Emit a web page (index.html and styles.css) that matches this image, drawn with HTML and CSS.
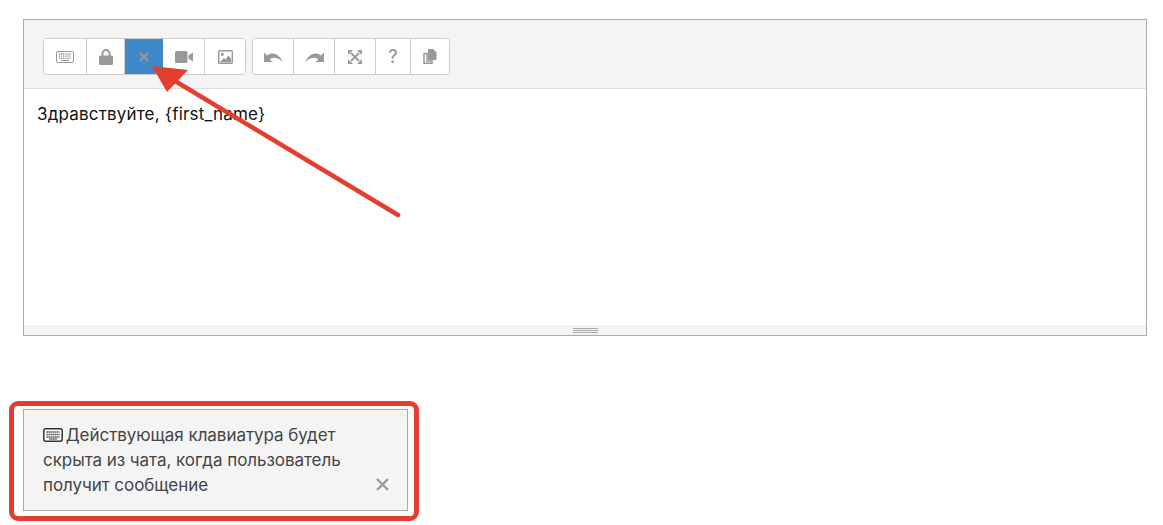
FILE: index.html
```html
<!DOCTYPE html>
<html lang="ru">
<head>
<meta charset="utf-8">
<title>Редактор</title>
<link rel="stylesheet" href="styles.css">
</head>
<body>
<div class="page">
  <section class="editor">
    <div class="toolbar">
      <div class="group">
        <button class="btn w43"><svg width="18" height="12" viewBox="0 0 18 12"><rect x=".5" y=".5" width="17" height="11" rx="1.5" fill="#fff" stroke="#999"/><path d="M3 3h12M3 5.2h12M3 7.4h12" stroke="#999" stroke-width="1.3" stroke-dasharray="1.2 .7"/><path d="M5 9.5h8" stroke="#999" stroke-width="1.2"/></svg></button>
        <button class="btn w38"><svg width="14" height="16" viewBox="0 0 14 16"><path d="M3.500 7V4.600a3.500 3.500 0 0 1 7 0V7" fill="none" stroke="#999" stroke-width="2"/><rect y="6.500" width="14" height="9.500" rx="1.500" fill="#999"/></svg></button>
        <button class="btn w38 active"><svg width="10" height="10" viewBox="0 0 10 10"><path d="M1 1l8 8M9 1l-8 8" stroke="#999" stroke-width="2"/></svg></button>
        <button class="btn w42"><svg width="18" height="12" viewBox="0 0 18 12"><rect width="12.500" height="12" rx="1.500" fill="#999"/><path d="M13.500 4.600L18 1.500v9l-4.500-3.100z" fill="#999"/></svg></button>
        <button class="btn w40"><svg width="15" height="14" viewBox="0 0 15 14"><rect x=".7" y=".7" width="13.600" height="12.600" rx="1" fill="#fff" stroke="#999" stroke-width="1.400"/><circle cx="4.300" cy="4.300" r="1.500" fill="#999"/><path d="M2 12l4-4 1.500 1.500L10.500 5.500 13 8.500V12z" fill="#999"/></svg></button>
      </div>
      <div class="group">
        <button class="btn w41"><svg width="19" height="10" viewBox="0 0 19 10"><path d="M0 .5V10h8.500L5.800 7.400C8.500 4.800 13.500 4.600 19 10 15.500 2.500 8.500-1 3.200 3.500z" fill="#999"/></svg></button>
        <button class="btn w41"><svg class="flip" width="19" height="10" viewBox="0 0 19 10"><path d="M0 .5V10h8.500L5.800 7.400C8.500 4.800 13.500 4.600 19 10 15.500 2.500 8.500-1 3.200 3.500z" fill="#999"/></svg></button>
        <button class="btn w41"><svg width="14" height="14" viewBox="0 0 14 14"><path d="M3 3l8 8M11 3l-8 8" stroke="#999" stroke-width="1.800"/><path d="M0 0h5L0 5zM14 0H9l5 5zM0 14h5l-5-5zM14 14H9l5-5z" fill="#999"/></svg></button>
        <button class="btn w35 qmark">?</button>
        <button class="btn w38"><svg width="14" height="15" viewBox="0 0 14 15"><path d="M1 4.500h3v7.500h5v2.200H1z" fill="none" stroke="#999" stroke-width="1.500"/><path d="M5 1a1 1 0 0 1 1-1h4l3.500 3.500V10a1 1 0 0 1-1 1H6a1 1 0 0 1-1-1z" fill="#999"/></svg></button>
      </div>
    </div>
    <div class="content">Здравствуйте, {first_name}</div>
    <div class="resize"><span class="grip"></span></div>
  </section>

  <div class="highlight">
    <div class="notice">
      <p class="notice-text"><svg class="kbd" width="20" height="14" viewBox="0 0 20 14"><rect x=".8" y=".8" width="18.400" height="12.400" rx="2" fill="#fff" stroke="#333" stroke-width="1.500"/><path d="M3.500 4h13M3.500 6.500h13M3.500 9h13" stroke="#333" stroke-width="1.400" stroke-dasharray="1.300 .7"/><path d="M6 11h8" stroke="#333" stroke-width="1"/></svg> Действующая клавиатура будет<br>скрыта из чата, когда пользователь<br>получит сообщение</p>
      <svg class="close" width="13" height="13" viewBox="0 0 13 13"><path d="M1 1l11 11M12 1L1 12" stroke="#999" stroke-width="2.400"/></svg>
    </div>
  </div>

  <svg class="arrow" width="420" height="230" viewBox="0 0 420 230"><path d="M398 215L170 78" stroke="#e53e30" stroke-width="4.500" stroke-linecap="round" fill="none"/><path d="M152 66L188 70 167 92z" fill="#e53e30"/></svg>
</div>
</body>
</html>
```
FILE: styles.css
```css
* { box-sizing: border-box; }
html, body { margin: 0; padding: 0; background: #fff; }
body { font-family: Inter, "Noto Sans", sans-serif; color: #111; }
.page { position: relative; width: 1163px; height: 525px; overflow: hidden; padding-top: 19px; }
.editor { margin-left: 23px; width: 1124px; height: 317px; border: 1px solid #aaa; display: flex; flex-direction: column; background: #fff; }
.toolbar { height: 69px; flex: none; background: #f4f4f4; border-bottom: 1px solid #ddd; padding: 18px 0 0 19px; display: flex; gap: 6px; align-items: flex-start; }
.group { display: flex; height: 37px; background: #fff; border: 1px solid #ccc; border-radius: 4px; overflow: hidden; }
.btn { display: flex; align-items: center; justify-content: center; height: 100%; padding: 0; margin: 0; border: 0; border-right: 1px solid #ccc; background: #fff; font: inherit; }
.btn:last-child { border-right: 0; }
.active { background: #3f88c9; border-right: 0; }
.w35 { width: 35px; }
.w38 { width: 38px; }
.w40 { width: 40px; }
.w41 { width: 41px; }
.w42 { width: 42px; }
.w43 { width: 43px; }
.flip { transform: scaleX(-1); }
.qmark { color: #999; font-size: 18px; font-weight: 500; }
.content { flex: 1; padding: 13px 13px 0; font-size: 17px; line-height: 24px; letter-spacing: .18px; }
.resize { height: 10px; flex: none; background: #f4f4f4; display: flex; justify-content: center; align-items: flex-start; padding-top: 3px; }
.grip { width: 25px; height: 5px; border-top: 1px solid #aaa; border-bottom: 1px solid #aaa; background: linear-gradient(#aaa, #aaa) center / 100% 1px no-repeat; }
.highlight { margin: 65px 0 0 9px; width: 410px; height: 120px; border: 5px solid #e53e30; border-radius: 9px; padding: 3px 6px 5px 9px; }
.notice { height: 102px; border: 1px solid #aaa; background: #f4f4f4; padding: 13px 18px 12px 19px; display: flex; justify-content: space-between; align-items: flex-end; }
.notice-text { margin: 0; font-size: 17px; line-height: 25px; letter-spacing: -.05px; color: #444; white-space: nowrap; }
.kbd { vertical-align: -1px; margin-right: -2px; }
.close { margin-bottom: 7px; flex: none; }
.arrow { position: absolute; left: 0; top: 0; pointer-events: none; }
```
